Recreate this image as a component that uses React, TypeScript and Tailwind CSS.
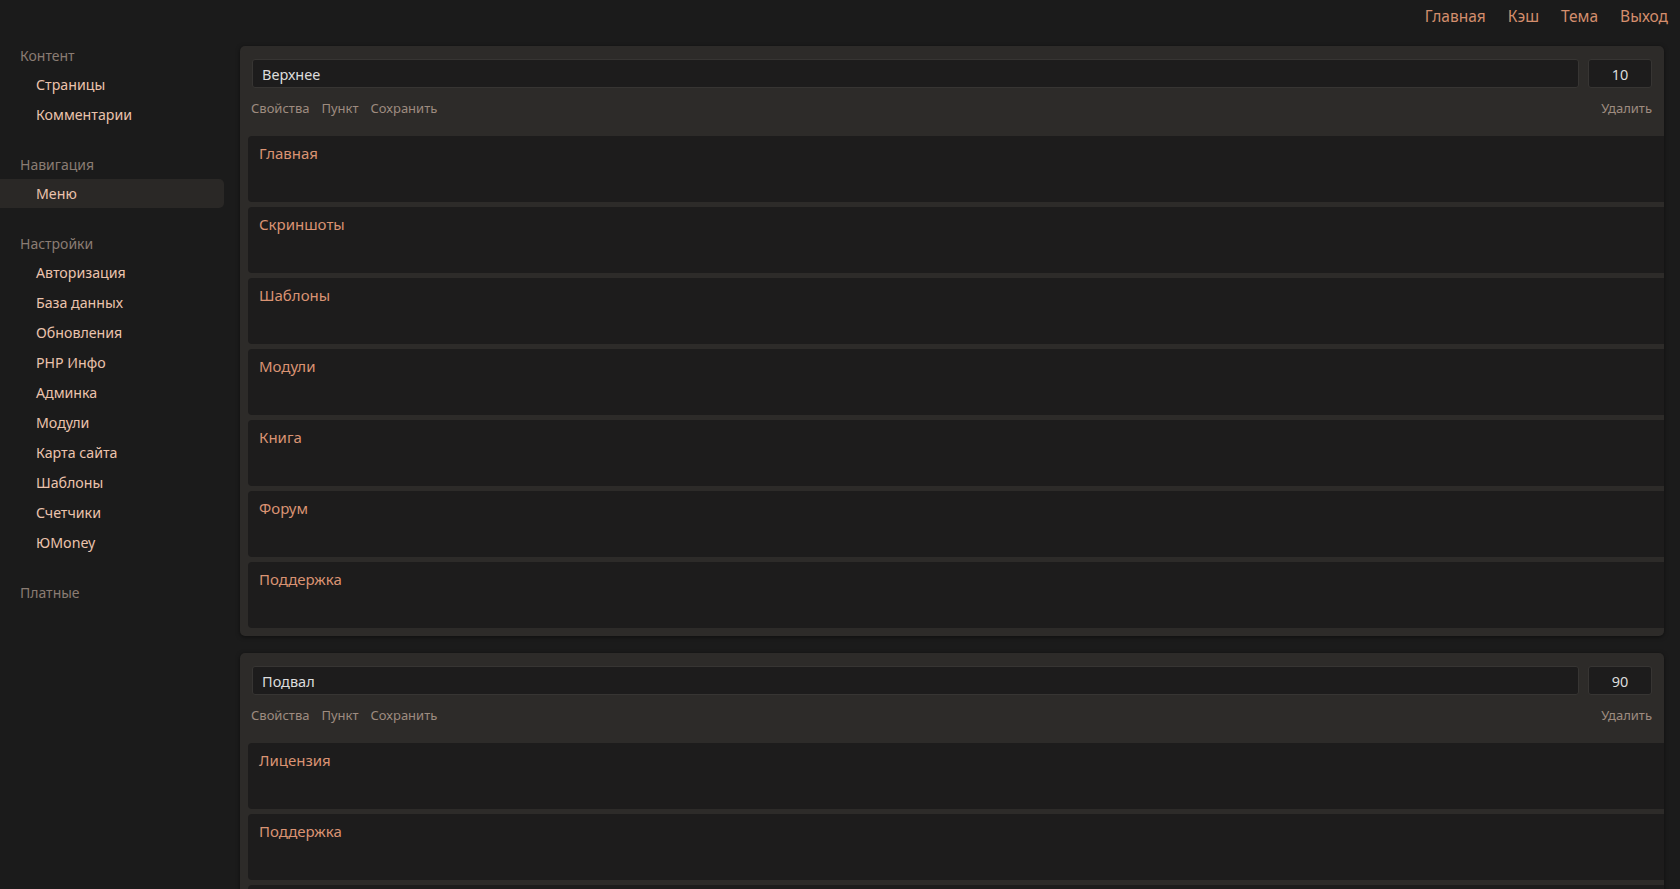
import React from 'react'

const font = { fontFamily: '"Noto Sans", "Open Sans", sans-serif' }

const topLinks = ['Главная', 'Кэш', 'Тема', 'Выход']

const sidebar = [
  { title: 'Контент', items: ['Страницы', 'Комментарии'] },
  { title: 'Навигация', items: ['Меню'] },
  {
    title: 'Настройки',
    items: ['Авторизация', 'База данных', 'Обновления', 'PHP Инфо', 'Админка', 'Модули', 'Карта сайта', 'Шаблоны', 'Счетчики', 'ЮMoney'],
  },
  { title: 'Платные', items: [] },
]

// the third footer item is only a sliver at the bottom edge
const menus = [
  { name: 'Верхнее', order: '10', items: ['Главная', 'Скриншоты', 'Шаблоны', 'Модули', 'Книга', 'Форум', 'Поддержка'] },
  { name: 'Подвал', order: '90', items: ['Лицензия', 'Поддержка', ''] },
]

function MenuCard({ name, order, items }: { name: string; order: string; items: string[] }) {
  return (
    <div className="bg-[#2d2b29] rounded-[5px] shadow-[0_1px_4px_rgba(0,0,0,0.5)] overflow-hidden">
      {/* header */}
      <div className="px-3 pt-[13px] pb-[17px]">
        <div className="flex gap-[9px]">
          <input
            defaultValue={name}
            className="flex-1 h-[29px] bg-[#1d1c1c] border border-[#373533] rounded-[3px] pl-[9px] text-[14.5px] text-[#dcdcdc] outline-none"
          />
          <input
            defaultValue={order}
            className="w-[64px] h-[29px] bg-[#1d1c1c] border border-[#373533] rounded-[3px] text-center text-[14.5px] text-[#dcdcdc] outline-none"
          />
        </div>
        <div className="mt-[11px] h-[20px] flex items-center justify-between text-[13px] text-[#9e8c80]">
          <div className="flex gap-[12px] -ml-px">
            <span>Свойства</span>
            <span>Пункт</span>
            <span>Сохранить</span>
          </div>
          <span>Удалить</span>
        </div>
      </div>
      {/* items */}
      <div className="pl-2 pb-2 flex flex-col gap-[5px]">
        {items.map((it, i) => (
          <div key={i} className="h-[66px] bg-[#1d1c1c] rounded-l-[4px] pl-[11px] pt-[7px]">
            <div className="text-[15px] leading-[20px] text-[#da9373]">{it}</div>
          </div>
        ))}
      </div>
    </div>
  )
}

export default function App() {
  return (
    <div className="min-h-screen bg-[#1b1b1b]" style={font}>
      {/* top bar */}
      <div className="h-[32px] pt-[2px] flex items-center justify-end gap-[22px] pr-[12px] text-[15.5px] text-[#d48e6d]">
        {topLinks.map(l => (
          <span key={l}>{l}</span>
        ))}
      </div>

      <div className="flex">
        {/* sidebar */}
        <div className="w-[224px] shrink-0 pt-[8px] flex flex-col gap-[19px]">
          {sidebar.map(g => (
            <div key={g.title}>
              <div className="h-[30px] flex items-center pl-[20px] text-[14px] text-[#8a7c73]">{g.title}</div>
              {g.items.map(it => (
                <div
                  key={it}
                  className={
                    it === 'Меню'
                      ? 'h-[29px] mb-px flex items-center pl-[36px] text-[14.2px] text-[#ebc3ad] bg-[#2a2826] rounded-r-[5px]'
                      : 'h-[30px] flex items-center pl-[36px] text-[14.2px] text-[#ebc3ad]'
                  }
                >
                  {it}
                </div>
              ))}
            </div>
          ))}
        </div>

        {/* main */}
        <div className="flex-1 px-4 pt-[14px] flex flex-col gap-[17px]">
          {menus.map(m => (
            <MenuCard key={m.name} {...m} />
          ))}
        </div>
      </div>
    </div>
  )
}
